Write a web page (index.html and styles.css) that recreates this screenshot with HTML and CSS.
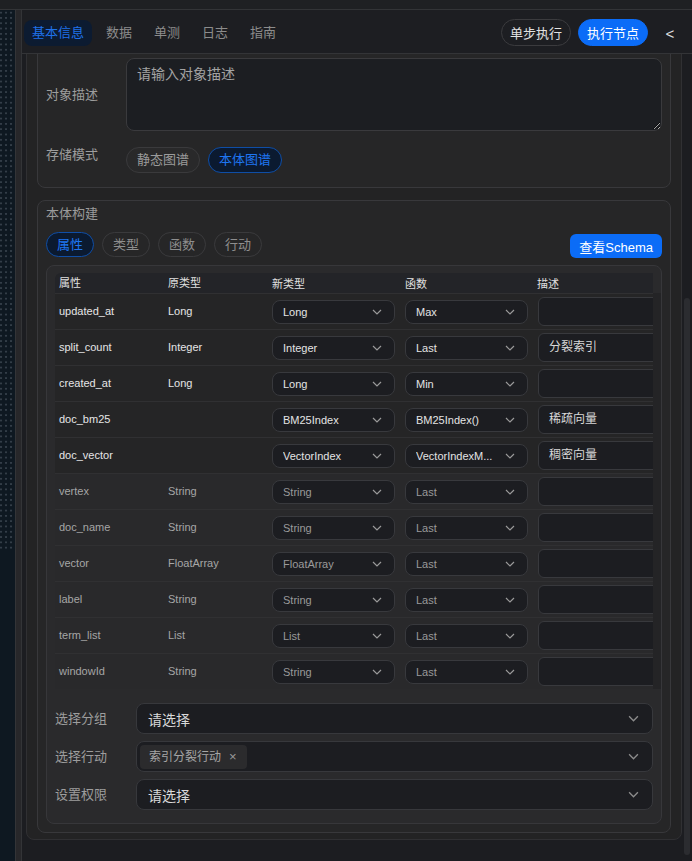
FILE: index.html
```html
<html>

<head>
    <link rel="stylesheet" href="styles.css">
</head>

<body>
    <div class="topbar"></div>
    <div class="frame">
        <div class="rail"><div class="dots"></div></div>
        <div class="gutter"></div>
        <div class="main">
            <div class="head">
                <div class="tabs">
                    <div class="tab on">基本信息</div>
                    <div class="tab">数据</div>
                    <div class="tab">单测</div>
                    <div class="tab">日志</div>
                    <div class="tab">指南</div>
                </div>
                <div class="actions">
                    <button class="btn">单步执行</button>
                    <button class="btn primary">执行节点</button>
                </div>
                <div class="back">&lt;</div>
            </div>
            <div class="body">
                <div class="scroll">
                    <div class="panel">
                        <div class="card info">
                            <div class="field">
                                <div class="lbl">对象描述</div>
                                <textarea placeholder="请输入对象描述"></textarea>
                            </div>
                            <div class="field top">
                                <div class="lbl">存储模式</div>
                                <div class="pills">
                                    <div class="pill">静态图谱</div>
                                    <div class="pill on">本体图谱</div>
                                </div>
                            </div>
                        </div>

                        <div class="card build">
                            <div class="title">本体构建</div>
                            <div class="tools">
                                <div class="pills small">
                                    <div class="pill on">属性</div>
                                    <div class="pill">类型</div>
                                    <div class="pill">函数</div>
                                    <div class="pill">行动</div>
                                </div>
                                <button class="schema">查看Schema</button>
                            </div>

                            <div class="sheet">
                                <div class="grid">
                                    <div class="table">
                                        <div class="row thead">
                                            <div class="cell">属性</div>
                                            <div class="cell">原类型</div>
                                            <div class="cell">新类型</div>
                                            <div class="cell">函数</div>
                                            <div class="cell">描述</div>
                                        </div>
                                        <div class="row set">
                                            <div class="cell">updated_at</div>
                                            <div class="cell">Long</div>
                                            <div class="cell"><div class="sel"><span>Long</span><svg class="chev" viewBox="0 0 10 6"><path d="M1 1l4 4 4-4"/></svg></div></div>
                                            <div class="cell"><div class="sel"><span>Max</span><svg class="chev" viewBox="0 0 10 6"><path d="M1 1l4 4 4-4"/></svg></div></div>
                                            <div class="cell"><div class="desc"></div></div>
                                        </div>
                                        <div class="row set">
                                            <div class="cell">split_count</div>
                                            <div class="cell">Integer</div>
                                            <div class="cell"><div class="sel"><span>Integer</span><svg class="chev" viewBox="0 0 10 6"><path d="M1 1l4 4 4-4"/></svg></div></div>
                                            <div class="cell"><div class="sel"><span>Last</span><svg class="chev" viewBox="0 0 10 6"><path d="M1 1l4 4 4-4"/></svg></div></div>
                                            <div class="cell"><div class="desc">分裂索引</div></div>
                                        </div>
                                        <div class="row set">
                                            <div class="cell">created_at</div>
                                            <div class="cell">Long</div>
                                            <div class="cell"><div class="sel"><span>Long</span><svg class="chev" viewBox="0 0 10 6"><path d="M1 1l4 4 4-4"/></svg></div></div>
                                            <div class="cell"><div class="sel"><span>Min</span><svg class="chev" viewBox="0 0 10 6"><path d="M1 1l4 4 4-4"/></svg></div></div>
                                            <div class="cell"><div class="desc"></div></div>
                                        </div>
                                        <div class="row set">
                                            <div class="cell">doc_bm25</div>
                                            <div class="cell"></div>
                                            <div class="cell"><div class="sel"><span>BM25Index</span><svg class="chev" viewBox="0 0 10 6"><path d="M1 1l4 4 4-4"/></svg></div></div>
                                            <div class="cell"><div class="sel"><span>BM25Index()</span><svg class="chev" viewBox="0 0 10 6"><path d="M1 1l4 4 4-4"/></svg></div></div>
                                            <div class="cell"><div class="desc">稀疏向量</div></div>
                                        </div>
                                        <div class="row set">
                                            <div class="cell">doc_vector</div>
                                            <div class="cell"></div>
                                            <div class="cell"><div class="sel"><span>VectorIndex</span><svg class="chev" viewBox="0 0 10 6"><path d="M1 1l4 4 4-4"/></svg></div></div>
                                            <div class="cell"><div class="sel"><span>VectorIndexM...</span><svg class="chev" viewBox="0 0 10 6"><path d="M1 1l4 4 4-4"/></svg></div></div>
                                            <div class="cell"><div class="desc">稠密向量</div></div>
                                        </div>
                                        <div class="row">
                                            <div class="cell">vertex</div>
                                            <div class="cell">String</div>
                                            <div class="cell"><div class="sel"><span>String</span><svg class="chev" viewBox="0 0 10 6"><path d="M1 1l4 4 4-4"/></svg></div></div>
                                            <div class="cell"><div class="sel"><span>Last</span><svg class="chev" viewBox="0 0 10 6"><path d="M1 1l4 4 4-4"/></svg></div></div>
                                            <div class="cell"><div class="desc"></div></div>
                                        </div>
                                        <div class="row">
                                            <div class="cell">doc_name</div>
                                            <div class="cell">String</div>
                                            <div class="cell"><div class="sel"><span>String</span><svg class="chev" viewBox="0 0 10 6"><path d="M1 1l4 4 4-4"/></svg></div></div>
                                            <div class="cell"><div class="sel"><span>Last</span><svg class="chev" viewBox="0 0 10 6"><path d="M1 1l4 4 4-4"/></svg></div></div>
                                            <div class="cell"><div class="desc"></div></div>
                                        </div>
                                        <div class="row">
                                            <div class="cell">vector</div>
                                            <div class="cell">FloatArray</div>
                                            <div class="cell"><div class="sel"><span>FloatArray</span><svg class="chev" viewBox="0 0 10 6"><path d="M1 1l4 4 4-4"/></svg></div></div>
                                            <div class="cell"><div class="sel"><span>Last</span><svg class="chev" viewBox="0 0 10 6"><path d="M1 1l4 4 4-4"/></svg></div></div>
                                            <div class="cell"><div class="desc"></div></div>
                                        </div>
                                        <div class="row">
                                            <div class="cell">label</div>
                                            <div class="cell">String</div>
                                            <div class="cell"><div class="sel"><span>String</span><svg class="chev" viewBox="0 0 10 6"><path d="M1 1l4 4 4-4"/></svg></div></div>
                                            <div class="cell"><div class="sel"><span>Last</span><svg class="chev" viewBox="0 0 10 6"><path d="M1 1l4 4 4-4"/></svg></div></div>
                                            <div class="cell"><div class="desc"></div></div>
                                        </div>
                                        <div class="row">
                                            <div class="cell">term_list</div>
                                            <div class="cell">List</div>
                                            <div class="cell"><div class="sel"><span>List</span><svg class="chev" viewBox="0 0 10 6"><path d="M1 1l4 4 4-4"/></svg></div></div>
                                            <div class="cell"><div class="sel"><span>Last</span><svg class="chev" viewBox="0 0 10 6"><path d="M1 1l4 4 4-4"/></svg></div></div>
                                            <div class="cell"><div class="desc"></div></div>
                                        </div>
                                        <div class="row">
                                            <div class="cell">windowId</div>
                                            <div class="cell">String</div>
                                            <div class="cell"><div class="sel"><span>String</span><svg class="chev" viewBox="0 0 10 6"><path d="M1 1l4 4 4-4"/></svg></div></div>
                                            <div class="cell"><div class="sel"><span>Last</span><svg class="chev" viewBox="0 0 10 6"><path d="M1 1l4 4 4-4"/></svg></div></div>
                                            <div class="cell"><div class="desc"></div></div>
                                        </div>
                                    </div>
                                    <div class="track"></div>
                                </div>

                                <div class="extra">
                                    <div class="pick">
                                        <div class="lbl">选择分组</div>
                                        <div class="box"><span>请选择</span><svg class="chev big" viewBox="0 0 10 6"><path d="M1 1l4 4 4-4"/></svg></div>
                                    </div>
                                    <div class="pick">
                                        <div class="lbl">选择行动</div>
                                        <div class="box multi"><span class="tag">索引分裂行动<i>×</i></span><svg class="chev big" viewBox="0 0 10 6"><path d="M1 1l4 4 4-4"/></svg></div>
                                    </div>
                                    <div class="pick">
                                        <div class="lbl">设置权限</div>
                                        <div class="box"><span>请选择</span><svg class="chev big" viewBox="0 0 10 6"><path d="M1 1l4 4 4-4"/></svg></div>
                                    </div>
                                </div>
                            </div>
                        </div>
                    </div>
                </div>
                <div class="vbar"><div class="thumb"></div></div>
            </div>
        </div>
    </div>
</body>

</html>
```

FILE: styles.css
```css
* {
    box-sizing: border-box;
}

html,
body {
    margin: 0;
    height: 100%;
}

body {
    background: #1c1d21;
    color: #d6d6d6;
    font-family: "Liberation Sans", "Noto Sans CJK SC", sans-serif;
    overflow: hidden;
}

button {
    font-family: inherit;
    cursor: pointer;
}

.topbar {
    height: 10px;
    background: #1f2023;
    border-bottom: 1px solid #333437;
}

.frame {
    display: flex;
    height: 851px;
}

/* dotted canvas strip on the far left */
.rail {
    width: 15px;
    flex: none;
    background: #0e1821;
}

.rail .dots {
    height: 542px;
    background-image: radial-gradient(circle, #56616d 0.6px, transparent 1.1px);
    background-size: 5px 5.3px;
    background-position: -1.5px 0;
}

.gutter {
    width: 7px;
    flex: none;
    background: #27272a;
    border-left: 1px solid #333437;
    border-right: 1px solid #333437;
}

.main {
    flex: 1;
    min-width: 0;
    display: flex;
    flex-direction: column;
}

/* header */
.head {
    height: 44px;
    flex: none;
    display: flex;
    align-items: center;
    padding: 2px 12px 0 2px;
    background: #1d1e22;
    border-bottom: 1px solid #333437;
}

.tabs {
    display: flex;
    gap: 6px;
}

.tab {
    height: 26px;
    line-height: 26px;
    padding: 0 8px;
    border-radius: 8px;
    font-size: 13px;
    color: #8c8c8c;
}

.tab.on {
    background: #0c1b31;
    color: #1f72ea;
}

.actions {
    margin-left: auto;
    display: flex;
    gap: 7px;
}

.btn {
    height: 27px;
    padding: 0 8px;
    border-radius: 14px;
    font-size: 13px;
    border: 1px solid #3b3b3e;
    background: none;
    color: #e2e2e2;
}

.btn.primary {
    background: #0b6cf7;
    border-color: #0b6cf7;
    color: #fff;
}

.back {
    width: 20px;
    margin-left: 12px;
    padding-top: 2px;
    text-align: center;
    font-size: 15px;
    color: #e0e0e0;
}

/* scrolled body */
.body {
    flex: 1;
    display: flex;
    overflow: hidden;
}

.scroll {
    flex: 1;
    min-width: 0;
    padding-left: 4px;
    overflow: hidden;
}

.panel {
    margin-top: -20px;
    padding: 10px 10px 6px;
    background: #232324;
    border: 1px solid #303033;
    border-radius: 0 0 8px 8px;
}

.vbar {
    width: 10px;
    flex: none;
    padding: 244px 2px 6px 2px;
}

.thumb {
    height: 557px;
    border-radius: 4px;
    background: #2b2c30;
}

.card {
    background: #262627;
    border: 1px solid #38383b;
    border-radius: 8px;
}

.info {
    padding: 12px 8px 14px;
}

.field {
    display: flex;
    align-items: center;
}

.field + .field {
    margin-top: 16px;
}

.field.top {
    align-items: flex-start;
}

.lbl {
    width: 80px;
    flex: none;
    font-size: 13px;
    line-height: 16px;
    color: #9d9d9d;
}

textarea {
    flex: 1;
    height: 73px;
    padding: 4px 10px;
    background: #1c1e22;
    border: 1px solid #3a3a3d;
    border-radius: 8px;
    font-family: inherit;
    font-size: 14px;
    color: #d6d6d6;
    color-scheme: dark;
    outline: none;
}

textarea::placeholder {
    color: #a3a3a3;
}

.pills {
    display: flex;
    gap: 8px;
}

.pill {
    height: 26px;
    line-height: 24px;
    padding: 0 10px;
    border: 1px solid #3a3a3c;
    border-radius: 13px;
    background: #29292a;
    font-size: 13px;
    color: #9b9b9b;
}

.pill.on {
    background: #0b1a30;
    border-color: #0f4ea6;
    color: #1f76f2;
}

.pills.small .pill {
    height: 25px;
    line-height: 23px;
    background: none;
    color: #8e8e8e;
}

.pills.small .pill.on {
    background: #0b1a30;
    color: #1f76f2;
}

/* ontology build */
.build {
    margin-top: 12px;
    padding: 5px 8px 8px;
}

.title {
    font-size: 13px;
    line-height: 16px;
    color: #9b9b9b;
}

.tools {
    margin-top: 10px;
    display: flex;
    justify-content: space-between;
    align-items: flex-start;
}

.schema {
    margin-top: 2px;
    height: 24px;
    padding: 0 9px;
    border: 0;
    border-radius: 6px;
    background: #0b6cf7;
    color: #fff;
    font-size: 13px;
}

.sheet {
    margin-top: 7px;
    padding: 7px 0 13px 8px;
    background: #2a2a2c;
    border: 1px solid #37373a;
    border-radius: 8px;
}

.grid {
    display: flex;
}

.table {
    flex: 1;
    min-width: 0;
    overflow: hidden;
}

.track {
    width: 8px;
    flex: none;
    margin-top: 20px;
    background: #242426;
}

.row {
    display: grid;
    grid-template-columns: 109px 104px 133px 132px 160px;
    width: 638px;
    height: 36px;
    border-top: 1px solid #303032;
    background: #29292b;
    font-size: 11px;
    color: #a6a6a6;
}

.row.set {
    background: #252526;
    color: #e6e6e6;
}

.row.thead {
    height: 20px;
    border-top: 0;
    border-radius: 6px 6px 0 0;
    background: #232428;
    color: #e0e0e0;
}

.cell {
    display: flex;
    align-items: center;
    padding-left: 4px;
    white-space: nowrap;
}

.row .cell:nth-child(-n+2) {
    padding-bottom: 2px;
}

.sel {
    width: 123px;
    height: 24px;
    display: flex;
    align-items: center;
    padding: 0 12px 0 10px;
    background: #1c1d21;
    border: 1px solid #38393d;
    border-radius: 8px;
    font-size: 11px;
    color: #9a9a9a;
}

.row.set .sel {
    color: #e4e4e4;
}

.sel span {
    flex: 1;
    min-width: 0;
    margin-right: 6px;
    overflow: hidden;
}

.chev {
    width: 10px;
    height: 6px;
    flex: none;
    fill: none;
    stroke: #9a9a9a;
    stroke-width: 1.2;
}

.chev.big {
    width: 11px;
    height: 7px;
    stroke: #8c8c8c;
}

.desc {
    width: 150px;
    height: 29px;
    margin-left: 1px;
    padding: 0 10px;
    line-height: 27px;
    background: #1c1d21;
    border: 1px solid #38393d;
    border-radius: 6px;
    font-size: 12px;
    color: #d8d8d8;
}

.extra {
    margin-top: 14px;
    padding-right: 8px;
    display: flex;
    flex-direction: column;
    gap: 7px;
}

.pick {
    display: flex;
    align-items: center;
}

.pick .lbl {
    width: 81px;
}

.box {
    flex: 1;
    height: 31px;
    display: flex;
    align-items: center;
    justify-content: space-between;
    padding: 0 13px 0 11px;
    background: #1c1d21;
    border: 1px solid #37383c;
    border-radius: 8px;
    font-size: 14px;
    color: #d9d9d9;
}

.box.multi {
    padding-left: 3px;
}

.tag {
    height: 24px;
    line-height: 24px;
    padding: 0 10px 0 9px;
    border-radius: 4px;
    background: #2b2b2d;
    font-size: 12px;
    color: #a6a6a6;
}

.tag i {
    margin-left: 8px;
    font-style: normal;
    font-size: 13px;
    color: #9a9a9a;
}
```
